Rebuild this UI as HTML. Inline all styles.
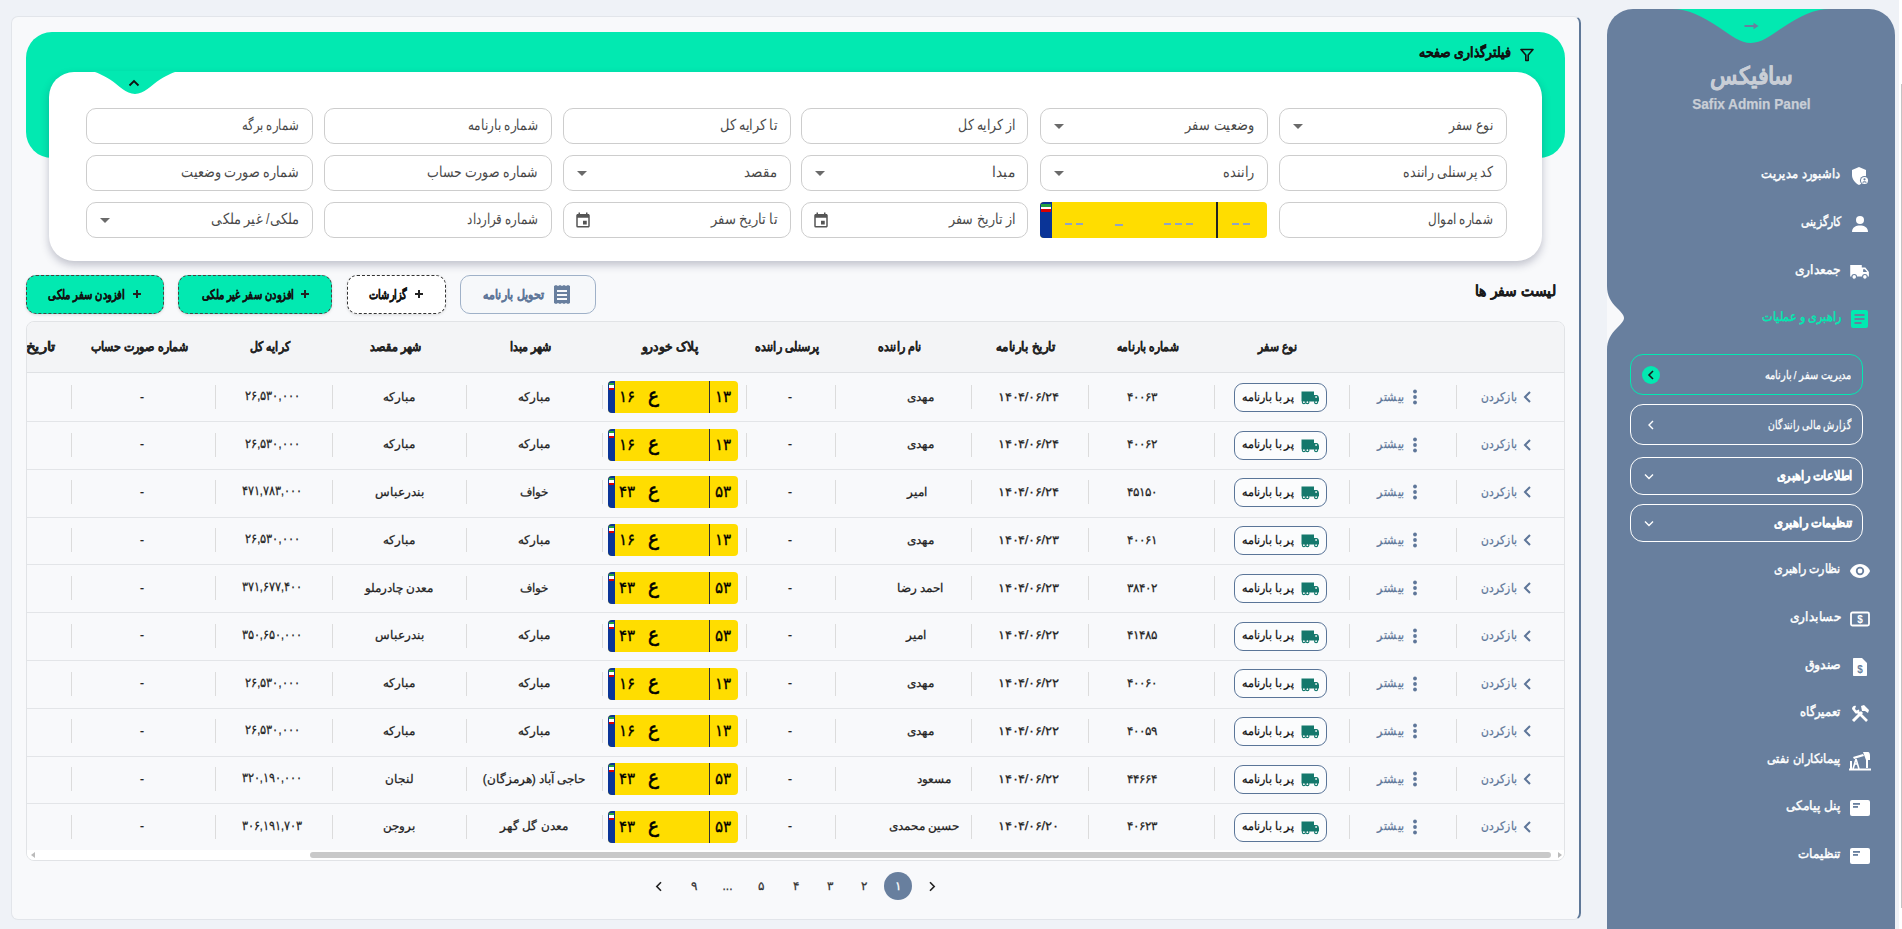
<!DOCTYPE html><html lang="fa" dir="rtl"><head><meta charset="utf-8"><style>
*{box-sizing:border-box;margin:0;padding:0}
html,body{width:1902px;height:929px;overflow:hidden}
body{background:#eff2f7;font-family:"Liberation Sans",sans-serif;color:#222;position:relative}
.a{position:absolute}
.t{position:absolute;white-space:nowrap;display:block;-webkit-text-stroke:.25px currentColor}
.main{position:absolute;left:11px;top:16px;width:1570px;height:904px;background:#f8f9fb;border:1px solid #e2e5ea;border-right:2px solid #5f7898;border-radius:7px}
.side{position:absolute;left:1607px;top:9px;width:288px;height:940px;background:#687f9e;border-radius:26px 26px 0 0;overflow:hidden}
.green{position:absolute;left:26px;top:32px;width:1539px;height:126px;background:#02e9b1;border-radius:26px}
.card{position:absolute;left:49px;top:72px;width:1493px;height:189px;background:#fff;border-radius:25px;box-shadow:0 4px 9px rgba(30,35,70,.26)}
.inp{position:absolute;height:36px;width:227.5px;border:1px solid #cdcdcd;border-radius:10px;background:#fff}
.tri{position:absolute;left:13px;top:15px;width:0;height:0;border-left:5px solid transparent;border-right:5px solid transparent;border-top:5px solid #6a6a6a}
.cal{position:absolute;left:10px;top:8px}
.plate{position:absolute;background:#ffdd00;border-radius:4px;overflow:hidden}
.plate .bl{position:absolute;left:0;top:0;bottom:0;background:#0a3497}
.btn{position:absolute;top:275px;height:39px;border-radius:10px}
.tbl{position:absolute;left:26px;top:321px;width:1539px;height:540px;border:1px solid #e1e3e6;border-radius:8px;overflow:hidden;background:#f8f9fb}
.th{position:absolute;top:0;height:51px;left:0;right:0;background:#f3f4f6;border-bottom:1px solid #dfe1e4}
.row{position:absolute;left:0;right:0;height:48px;border-bottom:1px solid #e3e5e8}
.sep{position:absolute;top:12px;width:1px;height:24px;background:#dcdcdc}
.badge{position:absolute;border:1.5px solid #5a7598;border-radius:9px;background:#fbfcfd}
.sub{position:absolute;left:23px;width:233px;border:1.5px solid #fff;border-radius:13px}
</style></head><body>
<div class="main"></div>
<div class="green"></div>
<div class="card"></div>
<svg class="a" style="left:91px;top:71px" width="88" height="24" viewBox="0 0 88 24"><path fill="#02e9b1" d="M0 0 H88 C83 1 77 3.5 69 8.5 C60 14.5 53 23 44 23 C35 23 28 14.5 19 8.5 C11 3.5 5 1 0 0 Z"/></svg>
<svg class="a" style="left:128px;top:79px" width="12" height="8" viewBox="0 0 12 8"><path d="M1.5 6.5 L6 2 L10.5 6.5" stroke="#111" stroke-width="1.8" fill="none"/></svg>
<svg class="a" style="left:1520px;top:48px" width="14" height="14" viewBox="0 0 14 14"><path d="M1 1.5 H13 L8.2 7 V12.5 H5.8 V7 Z" fill="none" stroke="#111" stroke-width="1.6" stroke-linejoin="round"/></svg>
<span class="t" style="left:1387.0px;transform-origin:right center;top:43.5px;font-size:13.5px;line-height:17px;font-weight:bold;color:#111;transform:scaleX(0.742)">فیلترگذاری صفحه</span>
<div class="inp" style="left:1279.00px;top:108px"><i class="tri"></i></div>
<span class="t" style="left:1439.0px;transform-origin:right center;top:115.5px;font-size:14.5px;line-height:18px;font-weight:normal;color:#4a4a4a;transform:scaleX(0.815);-webkit-text-stroke:0">نوع سفر</span>
<div class="inp" style="left:1040.30px;top:108px"><i class="tri"></i></div>
<span class="t" style="left:1174.3px;transform-origin:right center;top:115.5px;font-size:14.5px;line-height:18px;font-weight:normal;color:#4a4a4a;transform:scaleX(0.863);-webkit-text-stroke:0">وضعیت سفر</span>
<div class="inp" style="left:800.80px;top:108px"></div>
<span class="t" style="left:946.8px;transform-origin:right center;top:115.5px;font-size:14.5px;line-height:18px;font-weight:normal;color:#4a4a4a;transform:scaleX(0.832);-webkit-text-stroke:0">از کرایه کل</span>
<div class="inp" style="left:563.00px;top:108px"></div>
<span class="t" style="left:711.0px;transform-origin:right center;top:115.5px;font-size:14.5px;line-height:18px;font-weight:normal;color:#4a4a4a;transform:scaleX(0.862);-webkit-text-stroke:0">تا کرایه کل</span>
<div class="inp" style="left:324.20px;top:108px"></div>
<span class="t" style="left:451.2px;transform-origin:right center;top:115.5px;font-size:14.5px;line-height:18px;font-weight:normal;color:#4a4a4a;transform:scaleX(0.805);-webkit-text-stroke:0">شماره بارنامه</span>
<div class="inp" style="left:85.50px;top:108px"></div>
<span class="t" style="left:226.5px;transform-origin:right center;top:115.5px;font-size:14.5px;line-height:18px;font-weight:normal;color:#4a4a4a;transform:scaleX(0.778);-webkit-text-stroke:0">شماره برگه</span>
<div class="inp" style="left:1279.00px;top:155px"></div>
<span class="t" style="left:1386.0px;transform-origin:right center;top:162.5px;font-size:14.5px;line-height:18px;font-weight:normal;color:#4a4a4a;transform:scaleX(0.840);-webkit-text-stroke:0">کد پرسنلی راننده</span>
<div class="inp" style="left:1040.30px;top:155px"><i class="tri"></i></div>
<span class="t" style="left:1218.3px;transform-origin:right center;top:162.5px;font-size:14.5px;line-height:18px;font-weight:normal;color:#4a4a4a;transform:scaleX(0.858);-webkit-text-stroke:0">راننده</span>
<div class="inp" style="left:800.80px;top:155px"><i class="tri"></i></div>
<span class="t" style="left:989.8px;transform-origin:right center;top:162.5px;font-size:14.5px;line-height:18px;font-weight:normal;color:#4a4a4a;transform:scaleX(0.920);-webkit-text-stroke:0">مبدا</span>
<div class="inp" style="left:563.00px;top:155px"><i class="tri"></i></div>
<span class="t" style="left:740.0px;transform-origin:right center;top:162.5px;font-size:14.5px;line-height:18px;font-weight:normal;color:#4a4a4a;transform:scaleX(0.886);-webkit-text-stroke:0">مقصد</span>
<div class="inp" style="left:324.20px;top:155px"></div>
<span class="t" style="left:405.2px;transform-origin:right center;top:162.5px;font-size:14.5px;line-height:18px;font-weight:normal;color:#4a4a4a;transform:scaleX(0.835);-webkit-text-stroke:0">شماره صورت حساب</span>
<div class="inp" style="left:85.50px;top:155px"></div>
<span class="t" style="left:160.5px;transform-origin:right center;top:162.5px;font-size:14.5px;line-height:18px;font-weight:normal;color:#4a4a4a;transform:scaleX(0.851);-webkit-text-stroke:0">شماره صورت وضعیت</span>
<div class="inp" style="left:1279.00px;top:202px"></div>
<span class="t" style="left:1412.0px;transform-origin:right center;top:209.5px;font-size:14.5px;line-height:18px;font-weight:normal;color:#4a4a4a;transform:scaleX(0.799);-webkit-text-stroke:0">شماره اموال</span>
<div class="plate" style="left:1040px;top:202px;width:227px;height:36px"><div class="bl" style="width:12px"></div><div class="a" style="left:1px;top:2px;width:10px;height:8px;background:linear-gradient(#239f40 0 33%,#fff 33% 66%,#da0000 66%)"></div></div>
<div class="a" style="left:1216px;top:202px;width:2px;height:36px;background:#222"></div>
<div class="a" style="left:1065px;top:223px;width:7px;height:1.5px;background:#90a4c4"></div>
<div class="a" style="left:1076px;top:223px;width:7px;height:1.5px;background:#90a4c4"></div>
<div class="a" style="left:1115px;top:224px;width:8px;height:1.5px;background:#90a4c4"></div>
<div class="a" style="left:1164px;top:223px;width:7px;height:1.5px;background:#90a4c4"></div>
<div class="a" style="left:1175px;top:223px;width:7px;height:1.5px;background:#90a4c4"></div>
<div class="a" style="left:1186px;top:223px;width:7px;height:1.5px;background:#90a4c4"></div>
<div class="a" style="left:1232px;top:223px;width:7px;height:1.5px;background:#90a4c4"></div>
<div class="a" style="left:1243px;top:223px;width:7px;height:1.5px;background:#90a4c4"></div>
<div class="inp" style="left:800.80px;top:202px"><svg class="cal" width="18" height="18" viewBox="0 0 24 24"><path fill="#555" d="M19 4h-1V2h-2v2H8V2H6v2H5c-1.11 0-2 .9-2 2v14a2 2 0 0 0 2 2h14c1.1 0 2-.9 2-2V6c0-1.1-.9-2-2-2zm0 16H5V9h14v11zM12 13h5v5h-5z"/></svg></div>
<span class="t" style="left:936.8px;transform-origin:right center;top:209.5px;font-size:14.5px;line-height:18px;font-weight:normal;color:#4a4a4a;transform:scaleX(0.849);-webkit-text-stroke:0">از تاریخ سفر</span>
<div class="inp" style="left:563.00px;top:202px"><svg class="cal" width="18" height="18" viewBox="0 0 24 24"><path fill="#555" d="M19 4h-1V2h-2v2H8V2H6v2H5c-1.11 0-2 .9-2 2v14a2 2 0 0 0 2 2h14c1.1 0 2-.9 2-2V6c0-1.1-.9-2-2-2zm0 16H5V9h14v11zM12 13h5v5h-5z"/></svg></div>
<span class="t" style="left:701.0px;transform-origin:right center;top:209.5px;font-size:14.5px;line-height:18px;font-weight:normal;color:#4a4a4a;transform:scaleX(0.874);-webkit-text-stroke:0">تا تاریخ سفر</span>
<div class="inp" style="left:324.20px;top:202px"></div>
<span class="t" style="left:448.2px;transform-origin:right center;top:209.5px;font-size:14.5px;line-height:18px;font-weight:normal;color:#4a4a4a;transform:scaleX(0.789);-webkit-text-stroke:0">شماره قرارداد</span>
<div class="inp" style="left:85.50px;top:202px"><i class="tri"></i></div>
<span class="t" style="left:198.5px;transform-origin:right center;top:209.5px;font-size:14.5px;line-height:18px;font-weight:normal;color:#4a4a4a;transform:scaleX(0.868);-webkit-text-stroke:0">ملکی/ غیر ملکی</span>
<span class="t" style="left:1454.0px;transform-origin:right center;top:280.5px;font-size:15px;line-height:19px;font-weight:bold;color:#1a1a1a;transform:scaleX(0.799)">لیست سفر ها</span>
<div class="btn" style="left:460px;width:136px;border:1px solid #9fb1c8;background:#f6f8fa"></div>
<svg class="a" style="left:553px;top:285px" width="18" height="19" viewBox="0 0 18 19"><path fill="#687f9e" d="M1 1 L3 0 L5 1 L7 0 L9 1 L11 0 L13 1 L15 0 L17 1 V18 L15 19 L13 18 L11 19 L9 18 L7 19 L5 18 L3 19 L1 18 Z"/><rect x="4" y="5" width="10" height="2" fill="#f6f8fa"/><rect x="4" y="9" width="10" height="2" fill="#f6f8fa"/><rect x="4" y="13" width="10" height="2" fill="#f6f8fa"/></svg>
<span class="t" style="left:458.0px;transform-origin:right center;top:286.5px;font-size:12.5px;line-height:16px;font-weight:bold;color:#5e7699;transform:scaleX(0.714)">تحویل بارنامه</span>
<div class="btn" style="left:347px;width:99px;border:1px dashed #333;background:#fff;box-shadow:0 1px 3px rgba(0,0,0,.12)"></div>
<div class="btn" style="left:178px;width:154px;border:1px dashed #444;background:#02e9b1;box-shadow:0 1px 3px rgba(0,0,0,.12)"></div>
<div class="btn" style="left:26px;width:138px;border:1px dashed #444;background:#02e9b1;box-shadow:0 1px 3px rgba(0,0,0,.12)"></div>
<div class="a" style="left:415px;top:293px;width:8px;height:2px;background:#222"></div><div class="a" style="left:418px;top:290px;width:2px;height:8px;background:#222"></div>
<div class="a" style="left:301.4px;top:293px;width:8px;height:2px;background:#222"></div><div class="a" style="left:304.4px;top:290px;width:2px;height:8px;background:#222"></div>
<div class="a" style="left:133px;top:293px;width:8px;height:2px;background:#222"></div><div class="a" style="left:136px;top:290px;width:2px;height:8px;background:#222"></div>
<span class="t" style="left:349.3px;transform-origin:right center;top:286.5px;font-size:12.5px;line-height:16px;font-weight:bold;color:#111;transform:scaleX(0.653)">گزارشات</span>
<span class="t" style="left:149.0px;transform-origin:right center;top:286.5px;font-size:12.5px;line-height:16px;font-weight:bold;color:#111;transform:scaleX(0.638)">افزودن سفر غیر ملکی</span>
<span class="t" style="left:6.0px;transform-origin:right center;top:286.5px;font-size:12.5px;line-height:16px;font-weight:bold;color:#111;transform:scaleX(0.643)">افزودن سفر ملکی</span>
<div class="tbl"><div class="th"></div>
<span class="t" style="left:1222.5px;transform-origin:center center;top:17.0px;font-size:12.5px;line-height:16px;font-weight:bold;color:#222;transform:scaleX(0.704)">نوع سفر</span>
<span class="t" style="left:1076.1px;transform-origin:center center;top:17.0px;font-size:12.5px;line-height:16px;font-weight:bold;color:#222;transform:scaleX(0.697)">شماره بارنامه</span>
<span class="t" style="left:959.6px;transform-origin:center center;top:17.0px;font-size:12.5px;line-height:16px;font-weight:bold;color:#222;transform:scaleX(0.767)">تاریخ بارنامه</span>
<span class="t" style="left:842.0px;transform-origin:center center;top:17.0px;font-size:12.5px;line-height:16px;font-weight:bold;color:#222;transform:scaleX(0.716)">نام راننده</span>
<span class="t" style="left:715.5px;transform-origin:center center;top:17.0px;font-size:12.5px;line-height:16px;font-weight:bold;color:#222;transform:scaleX(0.722)">پرسنلی راننده</span>
<span class="t" style="left:607.5px;transform-origin:center center;top:17.0px;font-size:12.5px;line-height:16px;font-weight:bold;color:#222;transform:scaleX(0.806)">پلاک خودرو</span>
<span class="t" style="left:474.5px;transform-origin:center center;top:17.0px;font-size:12.5px;line-height:16px;font-weight:bold;color:#222;transform:scaleX(0.712)">شهر مبدا</span>
<span class="t" style="left:333.0px;transform-origin:center center;top:17.0px;font-size:12.5px;line-height:16px;font-weight:bold;color:#222;transform:scaleX(0.701)">شهر مقصد</span>
<span class="t" style="left:214.5px;transform-origin:center center;top:17.0px;font-size:12.5px;line-height:16px;font-weight:bold;color:#222;transform:scaleX(0.702)">کرایه کل</span>
<span class="t" style="left:46.5px;transform-origin:center center;top:17.0px;font-size:12.5px;line-height:16px;font-weight:bold;color:#222;transform:scaleX(0.745)">شماره صورت حساب</span>
<span class="t" style="left:-2.0px;transform-origin:right center;top:17.0px;font-size:12.5px;line-height:16px;font-weight:bold;color:#222;transform:scaleX(0.968)">تاریخ</span>
<div class="row" style="top:51px;height:49.0px">
<i class="sep" style="left:1429.4px;top:12.0px"></i>
<i class="sep" style="left:1321.5px;top:12.0px"></i>
<i class="sep" style="left:1186.6px;top:12.0px"></i>
<i class="sep" style="left:1060.6px;top:12.0px"></i>
<i class="sep" style="left:943.5px;top:12.0px"></i>
<i class="sep" style="left:808.4px;top:12.0px"></i>
<i class="sep" style="left:718.5px;top:12.0px"></i>
<i class="sep" style="left:574.6px;top:12.0px"></i>
<i class="sep" style="left:439.4px;top:12.0px"></i>
<i class="sep" style="left:304.5px;top:12.0px"></i>
<i class="sep" style="left:187.5px;top:12.0px"></i>
<i class="sep" style="left:43.5px;top:12.0px"></i>
<span class="t" style="left:1450.0px;transform-origin:right center;top:16.5px;font-size:12px;line-height:15px;font-weight:normal;color:#5e7699;transform:scaleX(0.893)">بازکردن</span>
<svg class="a" style="left:1496px;top:18.0px" width="9" height="12" viewBox="0 0 9 12"><path d="M7 1 L2 6 L7 11" stroke="#5e7699" stroke-width="2" fill="none"/></svg>
<span class="t" style="left:1348.0px;transform-origin:right center;top:16.5px;font-size:12px;line-height:15px;font-weight:normal;color:#5e7699;transform:scaleX(0.917)">بیشتر</span>
<svg class="a" style="left:1385px;top:16.0px" width="6" height="16" viewBox="0 0 6 16"><circle cx="3" cy="2.5" r="1.9" fill="#5e7699"/><circle cx="3" cy="8" r="1.9" fill="#5e7699"/><circle cx="3" cy="13.5" r="1.9" fill="#5e7699"/></svg>
<div class="badge" style="left:1207px;top:9.8px;width:93px;height:29px"></div>
<span class="t" style="left:1211.7px;transform-origin:right center;top:16.5px;font-size:12px;line-height:15px;font-weight:normal;color:#111;transform:scaleX(0.931)">پر با بارنامه</span>
<svg class="a" style="left:1274px;top:18.0px" width="19" height="14" viewBox="0 0 19 14"><path fill="#14786c" d="M0.5 0.5 H13 V4 H15.5 C17 4 18 5.5 18 7.5 V10.5 H0.5 Z"/><rect x="14.3" y="5.2" width="1.6" height="1.6" fill="#fbfcfd"/><circle cx="2.9" cy="11.2" r="1.5" fill="#fbfcfd" stroke="#14786c" stroke-width="1.2"/><circle cx="6.4" cy="11.2" r="1.5" fill="#fbfcfd" stroke="#14786c" stroke-width="1.2"/><circle cx="15.1" cy="11.2" r="1.5" fill="#fbfcfd" stroke="#14786c" stroke-width="1.2"/></svg>
<span class="t" style="left:1100.0px;transform-origin:center center;top:16.5px;font-size:12px;line-height:15px;font-weight:normal;color:#222">۴۰۰۶۳</span>
<span class="t" style="left:974.0px;transform-origin:center center;top:16.5px;font-size:12px;line-height:15px;font-weight:normal;color:#222;transform:scaleX(1.107)">۱۴۰۴/۰۶/۲۴</span>
<span class="t" style="left:880.0px;transform-origin:right center;top:16.5px;font-size:12px;line-height:15px;font-weight:normal;color:#222">مهدی</span>
<span class="t" style="left:761.0px;transform-origin:center center;top:16.5px;font-size:12px;line-height:15px;font-weight:normal;color:#222">-</span>
<div class="plate" style="left:581px;top:8.0px;width:130px;height:32px"><div class="bl" style="width:7px"></div><div class="a" style="left:1px;top:2px;width:5px;height:7px;background:linear-gradient(#239f40 0 33%,#fff 33% 66%,#da0000 66%)"></div><div class="a" style="left:101px;top:0;width:1px;height:32px;background:#333"></div></div>
<span class="t" style="left:687.0px;transform-origin:center center;top:14.0px;font-size:16px;line-height:20px;font-weight:normal;color:#000;transform:scaleX(0.944);-webkit-text-stroke:.3px #000">۱۳</span>
<span class="t" style="left:620.5px;transform-origin:center center;top:10.0px;font-size:20px;line-height:25px;font-weight:normal;color:#000;transform:scaleX(0.917);-webkit-text-stroke:.6px #000">ع</span>
<span class="t" style="left:591.0px;transform-origin:center center;top:14.0px;font-size:16px;line-height:20px;font-weight:normal;color:#000;transform:scaleX(0.944);-webkit-text-stroke:.3px #000">۱۶</span>
<span class="t" style="left:491.0px;transform-origin:center center;top:16.5px;font-size:12px;line-height:15px;font-weight:normal;color:#222">مبارکه</span>
<span class="t" style="left:356.0px;transform-origin:center center;top:16.5px;font-size:12px;line-height:15px;font-weight:normal;color:#222">مبارکه</span>
<span class="t" style="left:213.4px;transform-origin:center center;top:15.0px;font-size:12.5px;line-height:16px;font-weight:normal;color:#222;transform:scaleX(0.863)">۲۶,۵۳۰,۰۰۰</span>
<span class="t" style="left:113.0px;transform-origin:center center;top:16.5px;font-size:12px;line-height:15px;font-weight:normal;color:#222">-</span>
</div>
<div class="row" style="top:100.0px;height:47.8px">
<i class="sep" style="left:1429.4px;top:10.8px"></i>
<i class="sep" style="left:1321.5px;top:10.8px"></i>
<i class="sep" style="left:1186.6px;top:10.8px"></i>
<i class="sep" style="left:1060.6px;top:10.8px"></i>
<i class="sep" style="left:943.5px;top:10.8px"></i>
<i class="sep" style="left:808.4px;top:10.8px"></i>
<i class="sep" style="left:718.5px;top:10.8px"></i>
<i class="sep" style="left:574.6px;top:10.8px"></i>
<i class="sep" style="left:439.4px;top:10.8px"></i>
<i class="sep" style="left:304.5px;top:10.8px"></i>
<i class="sep" style="left:187.5px;top:10.8px"></i>
<i class="sep" style="left:43.5px;top:10.8px"></i>
<span class="t" style="left:1450.0px;transform-origin:right center;top:15.3px;font-size:12px;line-height:15px;font-weight:normal;color:#5e7699;transform:scaleX(0.893)">بازکردن</span>
<svg class="a" style="left:1496px;top:16.8px" width="9" height="12" viewBox="0 0 9 12"><path d="M7 1 L2 6 L7 11" stroke="#5e7699" stroke-width="2" fill="none"/></svg>
<span class="t" style="left:1348.0px;transform-origin:right center;top:15.3px;font-size:12px;line-height:15px;font-weight:normal;color:#5e7699;transform:scaleX(0.917)">بیشتر</span>
<svg class="a" style="left:1385px;top:14.8px" width="6" height="16" viewBox="0 0 6 16"><circle cx="3" cy="2.5" r="1.9" fill="#5e7699"/><circle cx="3" cy="8" r="1.9" fill="#5e7699"/><circle cx="3" cy="13.5" r="1.9" fill="#5e7699"/></svg>
<div class="badge" style="left:1207px;top:8.6px;width:93px;height:29px"></div>
<span class="t" style="left:1211.7px;transform-origin:right center;top:15.3px;font-size:12px;line-height:15px;font-weight:normal;color:#111;transform:scaleX(0.931)">پر با بارنامه</span>
<svg class="a" style="left:1274px;top:16.8px" width="19" height="14" viewBox="0 0 19 14"><path fill="#14786c" d="M0.5 0.5 H13 V4 H15.5 C17 4 18 5.5 18 7.5 V10.5 H0.5 Z"/><rect x="14.3" y="5.2" width="1.6" height="1.6" fill="#fbfcfd"/><circle cx="2.9" cy="11.2" r="1.5" fill="#fbfcfd" stroke="#14786c" stroke-width="1.2"/><circle cx="6.4" cy="11.2" r="1.5" fill="#fbfcfd" stroke="#14786c" stroke-width="1.2"/><circle cx="15.1" cy="11.2" r="1.5" fill="#fbfcfd" stroke="#14786c" stroke-width="1.2"/></svg>
<span class="t" style="left:1100.0px;transform-origin:center center;top:15.3px;font-size:12px;line-height:15px;font-weight:normal;color:#222">۴۰۰۶۲</span>
<span class="t" style="left:974.0px;transform-origin:center center;top:15.3px;font-size:12px;line-height:15px;font-weight:normal;color:#222;transform:scaleX(1.107)">۱۴۰۴/۰۶/۲۴</span>
<span class="t" style="left:880.0px;transform-origin:right center;top:15.3px;font-size:12px;line-height:15px;font-weight:normal;color:#222">مهدی</span>
<span class="t" style="left:761.0px;transform-origin:center center;top:15.3px;font-size:12px;line-height:15px;font-weight:normal;color:#222">-</span>
<div class="plate" style="left:581px;top:6.8px;width:130px;height:32px"><div class="bl" style="width:7px"></div><div class="a" style="left:1px;top:2px;width:5px;height:7px;background:linear-gradient(#239f40 0 33%,#fff 33% 66%,#da0000 66%)"></div><div class="a" style="left:101px;top:0;width:1px;height:32px;background:#333"></div></div>
<span class="t" style="left:687.0px;transform-origin:center center;top:12.8px;font-size:16px;line-height:20px;font-weight:normal;color:#000;transform:scaleX(0.944);-webkit-text-stroke:.3px #000">۱۳</span>
<span class="t" style="left:620.5px;transform-origin:center center;top:8.8px;font-size:20px;line-height:25px;font-weight:normal;color:#000;transform:scaleX(0.917);-webkit-text-stroke:.6px #000">ع</span>
<span class="t" style="left:591.0px;transform-origin:center center;top:12.8px;font-size:16px;line-height:20px;font-weight:normal;color:#000;transform:scaleX(0.944);-webkit-text-stroke:.3px #000">۱۶</span>
<span class="t" style="left:491.0px;transform-origin:center center;top:15.3px;font-size:12px;line-height:15px;font-weight:normal;color:#222">مبارکه</span>
<span class="t" style="left:356.0px;transform-origin:center center;top:15.3px;font-size:12px;line-height:15px;font-weight:normal;color:#222">مبارکه</span>
<span class="t" style="left:213.4px;transform-origin:center center;top:13.8px;font-size:12.5px;line-height:16px;font-weight:normal;color:#222;transform:scaleX(0.863)">۲۶,۵۳۰,۰۰۰</span>
<span class="t" style="left:113.0px;transform-origin:center center;top:15.3px;font-size:12px;line-height:15px;font-weight:normal;color:#222">-</span>
</div>
<div class="row" style="top:147.8px;height:47.8px">
<i class="sep" style="left:1429.4px;top:10.7px"></i>
<i class="sep" style="left:1321.5px;top:10.7px"></i>
<i class="sep" style="left:1186.6px;top:10.7px"></i>
<i class="sep" style="left:1060.6px;top:10.7px"></i>
<i class="sep" style="left:943.5px;top:10.7px"></i>
<i class="sep" style="left:808.4px;top:10.7px"></i>
<i class="sep" style="left:718.5px;top:10.7px"></i>
<i class="sep" style="left:574.6px;top:10.7px"></i>
<i class="sep" style="left:439.4px;top:10.7px"></i>
<i class="sep" style="left:304.5px;top:10.7px"></i>
<i class="sep" style="left:187.5px;top:10.7px"></i>
<i class="sep" style="left:43.5px;top:10.7px"></i>
<span class="t" style="left:1450.0px;transform-origin:right center;top:15.2px;font-size:12px;line-height:15px;font-weight:normal;color:#5e7699;transform:scaleX(0.893)">بازکردن</span>
<svg class="a" style="left:1496px;top:16.7px" width="9" height="12" viewBox="0 0 9 12"><path d="M7 1 L2 6 L7 11" stroke="#5e7699" stroke-width="2" fill="none"/></svg>
<span class="t" style="left:1348.0px;transform-origin:right center;top:15.2px;font-size:12px;line-height:15px;font-weight:normal;color:#5e7699;transform:scaleX(0.917)">بیشتر</span>
<svg class="a" style="left:1385px;top:14.7px" width="6" height="16" viewBox="0 0 6 16"><circle cx="3" cy="2.5" r="1.9" fill="#5e7699"/><circle cx="3" cy="8" r="1.9" fill="#5e7699"/><circle cx="3" cy="13.5" r="1.9" fill="#5e7699"/></svg>
<div class="badge" style="left:1207px;top:8.5px;width:93px;height:29px"></div>
<span class="t" style="left:1211.7px;transform-origin:right center;top:15.2px;font-size:12px;line-height:15px;font-weight:normal;color:#111;transform:scaleX(0.931)">پر با بارنامه</span>
<svg class="a" style="left:1274px;top:16.7px" width="19" height="14" viewBox="0 0 19 14"><path fill="#14786c" d="M0.5 0.5 H13 V4 H15.5 C17 4 18 5.5 18 7.5 V10.5 H0.5 Z"/><rect x="14.3" y="5.2" width="1.6" height="1.6" fill="#fbfcfd"/><circle cx="2.9" cy="11.2" r="1.5" fill="#fbfcfd" stroke="#14786c" stroke-width="1.2"/><circle cx="6.4" cy="11.2" r="1.5" fill="#fbfcfd" stroke="#14786c" stroke-width="1.2"/><circle cx="15.1" cy="11.2" r="1.5" fill="#fbfcfd" stroke="#14786c" stroke-width="1.2"/></svg>
<span class="t" style="left:1100.0px;transform-origin:center center;top:15.2px;font-size:12px;line-height:15px;font-weight:normal;color:#222">۴۵۱۵۰</span>
<span class="t" style="left:974.0px;transform-origin:center center;top:15.2px;font-size:12px;line-height:15px;font-weight:normal;color:#222;transform:scaleX(1.107)">۱۴۰۴/۰۶/۲۴</span>
<span class="t" style="left:880.0px;transform-origin:right center;top:15.2px;font-size:12px;line-height:15px;font-weight:normal;color:#222">امیر</span>
<span class="t" style="left:761.0px;transform-origin:center center;top:15.2px;font-size:12px;line-height:15px;font-weight:normal;color:#222">-</span>
<div class="plate" style="left:581px;top:6.7px;width:130px;height:32px"><div class="bl" style="width:7px"></div><div class="a" style="left:1px;top:2px;width:5px;height:7px;background:linear-gradient(#239f40 0 33%,#fff 33% 66%,#da0000 66%)"></div><div class="a" style="left:101px;top:0;width:1px;height:32px;background:#333"></div></div>
<span class="t" style="left:687.0px;transform-origin:center center;top:12.7px;font-size:16px;line-height:20px;font-weight:normal;color:#000;transform:scaleX(0.944);-webkit-text-stroke:.3px #000">۵۳</span>
<span class="t" style="left:620.5px;transform-origin:center center;top:8.7px;font-size:20px;line-height:25px;font-weight:normal;color:#000;transform:scaleX(0.917);-webkit-text-stroke:.6px #000">ع</span>
<span class="t" style="left:591.0px;transform-origin:center center;top:12.7px;font-size:16px;line-height:20px;font-weight:normal;color:#000;transform:scaleX(0.944);-webkit-text-stroke:.3px #000">۴۳</span>
<span class="t" style="left:493.0px;transform-origin:center center;top:15.2px;font-size:12px;line-height:15px;font-weight:normal;color:#222">خواف</span>
<span class="t" style="left:347.5px;transform-origin:center center;top:15.2px;font-size:12px;line-height:15px;font-weight:normal;color:#222">بندرعباس</span>
<span class="t" style="left:209.9px;transform-origin:center center;top:13.7px;font-size:12.5px;line-height:16px;font-weight:normal;color:#222;transform:scaleX(0.855)">۴۷۱,۷۸۳,۰۰۰</span>
<span class="t" style="left:113.0px;transform-origin:center center;top:15.2px;font-size:12px;line-height:15px;font-weight:normal;color:#222">-</span>
</div>
<div class="row" style="top:195.6px;height:47.8px">
<i class="sep" style="left:1429.4px;top:10.7px"></i>
<i class="sep" style="left:1321.5px;top:10.7px"></i>
<i class="sep" style="left:1186.6px;top:10.7px"></i>
<i class="sep" style="left:1060.6px;top:10.7px"></i>
<i class="sep" style="left:943.5px;top:10.7px"></i>
<i class="sep" style="left:808.4px;top:10.7px"></i>
<i class="sep" style="left:718.5px;top:10.7px"></i>
<i class="sep" style="left:574.6px;top:10.7px"></i>
<i class="sep" style="left:439.4px;top:10.7px"></i>
<i class="sep" style="left:304.5px;top:10.7px"></i>
<i class="sep" style="left:187.5px;top:10.7px"></i>
<i class="sep" style="left:43.5px;top:10.7px"></i>
<span class="t" style="left:1450.0px;transform-origin:right center;top:15.2px;font-size:12px;line-height:15px;font-weight:normal;color:#5e7699;transform:scaleX(0.893)">بازکردن</span>
<svg class="a" style="left:1496px;top:16.7px" width="9" height="12" viewBox="0 0 9 12"><path d="M7 1 L2 6 L7 11" stroke="#5e7699" stroke-width="2" fill="none"/></svg>
<span class="t" style="left:1348.0px;transform-origin:right center;top:15.2px;font-size:12px;line-height:15px;font-weight:normal;color:#5e7699;transform:scaleX(0.917)">بیشتر</span>
<svg class="a" style="left:1385px;top:14.7px" width="6" height="16" viewBox="0 0 6 16"><circle cx="3" cy="2.5" r="1.9" fill="#5e7699"/><circle cx="3" cy="8" r="1.9" fill="#5e7699"/><circle cx="3" cy="13.5" r="1.9" fill="#5e7699"/></svg>
<div class="badge" style="left:1207px;top:8.5px;width:93px;height:29px"></div>
<span class="t" style="left:1211.7px;transform-origin:right center;top:15.2px;font-size:12px;line-height:15px;font-weight:normal;color:#111;transform:scaleX(0.931)">پر با بارنامه</span>
<svg class="a" style="left:1274px;top:16.7px" width="19" height="14" viewBox="0 0 19 14"><path fill="#14786c" d="M0.5 0.5 H13 V4 H15.5 C17 4 18 5.5 18 7.5 V10.5 H0.5 Z"/><rect x="14.3" y="5.2" width="1.6" height="1.6" fill="#fbfcfd"/><circle cx="2.9" cy="11.2" r="1.5" fill="#fbfcfd" stroke="#14786c" stroke-width="1.2"/><circle cx="6.4" cy="11.2" r="1.5" fill="#fbfcfd" stroke="#14786c" stroke-width="1.2"/><circle cx="15.1" cy="11.2" r="1.5" fill="#fbfcfd" stroke="#14786c" stroke-width="1.2"/></svg>
<span class="t" style="left:1100.0px;transform-origin:center center;top:15.2px;font-size:12px;line-height:15px;font-weight:normal;color:#222">۴۰۰۶۱</span>
<span class="t" style="left:974.0px;transform-origin:center center;top:15.2px;font-size:12px;line-height:15px;font-weight:normal;color:#222;transform:scaleX(1.107)">۱۴۰۴/۰۶/۲۳</span>
<span class="t" style="left:880.0px;transform-origin:right center;top:15.2px;font-size:12px;line-height:15px;font-weight:normal;color:#222">مهدی</span>
<span class="t" style="left:761.0px;transform-origin:center center;top:15.2px;font-size:12px;line-height:15px;font-weight:normal;color:#222">-</span>
<div class="plate" style="left:581px;top:6.7px;width:130px;height:32px"><div class="bl" style="width:7px"></div><div class="a" style="left:1px;top:2px;width:5px;height:7px;background:linear-gradient(#239f40 0 33%,#fff 33% 66%,#da0000 66%)"></div><div class="a" style="left:101px;top:0;width:1px;height:32px;background:#333"></div></div>
<span class="t" style="left:687.0px;transform-origin:center center;top:12.7px;font-size:16px;line-height:20px;font-weight:normal;color:#000;transform:scaleX(0.944);-webkit-text-stroke:.3px #000">۱۳</span>
<span class="t" style="left:620.5px;transform-origin:center center;top:8.7px;font-size:20px;line-height:25px;font-weight:normal;color:#000;transform:scaleX(0.917);-webkit-text-stroke:.6px #000">ع</span>
<span class="t" style="left:591.0px;transform-origin:center center;top:12.7px;font-size:16px;line-height:20px;font-weight:normal;color:#000;transform:scaleX(0.944);-webkit-text-stroke:.3px #000">۱۶</span>
<span class="t" style="left:491.0px;transform-origin:center center;top:15.2px;font-size:12px;line-height:15px;font-weight:normal;color:#222">مبارکه</span>
<span class="t" style="left:356.0px;transform-origin:center center;top:15.2px;font-size:12px;line-height:15px;font-weight:normal;color:#222">مبارکه</span>
<span class="t" style="left:213.4px;transform-origin:center center;top:13.7px;font-size:12.5px;line-height:16px;font-weight:normal;color:#222;transform:scaleX(0.863)">۲۶,۵۳۰,۰۰۰</span>
<span class="t" style="left:113.0px;transform-origin:center center;top:15.2px;font-size:12px;line-height:15px;font-weight:normal;color:#222">-</span>
</div>
<div class="row" style="top:243.4px;height:47.8px">
<i class="sep" style="left:1429.4px;top:10.7px"></i>
<i class="sep" style="left:1321.5px;top:10.7px"></i>
<i class="sep" style="left:1186.6px;top:10.7px"></i>
<i class="sep" style="left:1060.6px;top:10.7px"></i>
<i class="sep" style="left:943.5px;top:10.7px"></i>
<i class="sep" style="left:808.4px;top:10.7px"></i>
<i class="sep" style="left:718.5px;top:10.7px"></i>
<i class="sep" style="left:574.6px;top:10.7px"></i>
<i class="sep" style="left:439.4px;top:10.7px"></i>
<i class="sep" style="left:304.5px;top:10.7px"></i>
<i class="sep" style="left:187.5px;top:10.7px"></i>
<i class="sep" style="left:43.5px;top:10.7px"></i>
<span class="t" style="left:1450.0px;transform-origin:right center;top:15.2px;font-size:12px;line-height:15px;font-weight:normal;color:#5e7699;transform:scaleX(0.893)">بازکردن</span>
<svg class="a" style="left:1496px;top:16.7px" width="9" height="12" viewBox="0 0 9 12"><path d="M7 1 L2 6 L7 11" stroke="#5e7699" stroke-width="2" fill="none"/></svg>
<span class="t" style="left:1348.0px;transform-origin:right center;top:15.2px;font-size:12px;line-height:15px;font-weight:normal;color:#5e7699;transform:scaleX(0.917)">بیشتر</span>
<svg class="a" style="left:1385px;top:14.7px" width="6" height="16" viewBox="0 0 6 16"><circle cx="3" cy="2.5" r="1.9" fill="#5e7699"/><circle cx="3" cy="8" r="1.9" fill="#5e7699"/><circle cx="3" cy="13.5" r="1.9" fill="#5e7699"/></svg>
<div class="badge" style="left:1207px;top:8.5px;width:93px;height:29px"></div>
<span class="t" style="left:1211.7px;transform-origin:right center;top:15.2px;font-size:12px;line-height:15px;font-weight:normal;color:#111;transform:scaleX(0.931)">پر با بارنامه</span>
<svg class="a" style="left:1274px;top:16.7px" width="19" height="14" viewBox="0 0 19 14"><path fill="#14786c" d="M0.5 0.5 H13 V4 H15.5 C17 4 18 5.5 18 7.5 V10.5 H0.5 Z"/><rect x="14.3" y="5.2" width="1.6" height="1.6" fill="#fbfcfd"/><circle cx="2.9" cy="11.2" r="1.5" fill="#fbfcfd" stroke="#14786c" stroke-width="1.2"/><circle cx="6.4" cy="11.2" r="1.5" fill="#fbfcfd" stroke="#14786c" stroke-width="1.2"/><circle cx="15.1" cy="11.2" r="1.5" fill="#fbfcfd" stroke="#14786c" stroke-width="1.2"/></svg>
<span class="t" style="left:1100.0px;transform-origin:center center;top:15.2px;font-size:12px;line-height:15px;font-weight:normal;color:#222">۳۸۴۰۲</span>
<span class="t" style="left:974.0px;transform-origin:center center;top:15.2px;font-size:12px;line-height:15px;font-weight:normal;color:#222;transform:scaleX(1.107)">۱۴۰۴/۰۶/۲۳</span>
<span class="t" style="left:870.0px;transform-origin:right center;top:15.2px;font-size:12px;line-height:15px;font-weight:normal;color:#222">احمد رضا</span>
<span class="t" style="left:761.0px;transform-origin:center center;top:15.2px;font-size:12px;line-height:15px;font-weight:normal;color:#222">-</span>
<div class="plate" style="left:581px;top:6.7px;width:130px;height:32px"><div class="bl" style="width:7px"></div><div class="a" style="left:1px;top:2px;width:5px;height:7px;background:linear-gradient(#239f40 0 33%,#fff 33% 66%,#da0000 66%)"></div><div class="a" style="left:101px;top:0;width:1px;height:32px;background:#333"></div></div>
<span class="t" style="left:687.0px;transform-origin:center center;top:12.7px;font-size:16px;line-height:20px;font-weight:normal;color:#000;transform:scaleX(0.944);-webkit-text-stroke:.3px #000">۵۳</span>
<span class="t" style="left:620.5px;transform-origin:center center;top:8.7px;font-size:20px;line-height:25px;font-weight:normal;color:#000;transform:scaleX(0.917);-webkit-text-stroke:.6px #000">ع</span>
<span class="t" style="left:591.0px;transform-origin:center center;top:12.7px;font-size:16px;line-height:20px;font-weight:normal;color:#000;transform:scaleX(0.944);-webkit-text-stroke:.3px #000">۴۳</span>
<span class="t" style="left:493.0px;transform-origin:center center;top:15.2px;font-size:12px;line-height:15px;font-weight:normal;color:#222">خواف</span>
<span class="t" style="left:338.0px;transform-origin:center center;top:15.2px;font-size:12px;line-height:15px;font-weight:normal;color:#222">معدن چادرملو</span>
<span class="t" style="left:209.9px;transform-origin:center center;top:13.7px;font-size:12.5px;line-height:16px;font-weight:normal;color:#222;transform:scaleX(0.855)">۳۷۱,۶۷۷,۴۰۰</span>
<span class="t" style="left:113.0px;transform-origin:center center;top:15.2px;font-size:12px;line-height:15px;font-weight:normal;color:#222">-</span>
</div>
<div class="row" style="top:291.2px;height:47.8px">
<i class="sep" style="left:1429.4px;top:10.6px"></i>
<i class="sep" style="left:1321.5px;top:10.6px"></i>
<i class="sep" style="left:1186.6px;top:10.6px"></i>
<i class="sep" style="left:1060.6px;top:10.6px"></i>
<i class="sep" style="left:943.5px;top:10.6px"></i>
<i class="sep" style="left:808.4px;top:10.6px"></i>
<i class="sep" style="left:718.5px;top:10.6px"></i>
<i class="sep" style="left:574.6px;top:10.6px"></i>
<i class="sep" style="left:439.4px;top:10.6px"></i>
<i class="sep" style="left:304.5px;top:10.6px"></i>
<i class="sep" style="left:187.5px;top:10.6px"></i>
<i class="sep" style="left:43.5px;top:10.6px"></i>
<span class="t" style="left:1450.0px;transform-origin:right center;top:15.1px;font-size:12px;line-height:15px;font-weight:normal;color:#5e7699;transform:scaleX(0.893)">بازکردن</span>
<svg class="a" style="left:1496px;top:16.6px" width="9" height="12" viewBox="0 0 9 12"><path d="M7 1 L2 6 L7 11" stroke="#5e7699" stroke-width="2" fill="none"/></svg>
<span class="t" style="left:1348.0px;transform-origin:right center;top:15.1px;font-size:12px;line-height:15px;font-weight:normal;color:#5e7699;transform:scaleX(0.917)">بیشتر</span>
<svg class="a" style="left:1385px;top:14.6px" width="6" height="16" viewBox="0 0 6 16"><circle cx="3" cy="2.5" r="1.9" fill="#5e7699"/><circle cx="3" cy="8" r="1.9" fill="#5e7699"/><circle cx="3" cy="13.5" r="1.9" fill="#5e7699"/></svg>
<div class="badge" style="left:1207px;top:8.4px;width:93px;height:29px"></div>
<span class="t" style="left:1211.7px;transform-origin:right center;top:15.1px;font-size:12px;line-height:15px;font-weight:normal;color:#111;transform:scaleX(0.931)">پر با بارنامه</span>
<svg class="a" style="left:1274px;top:16.6px" width="19" height="14" viewBox="0 0 19 14"><path fill="#14786c" d="M0.5 0.5 H13 V4 H15.5 C17 4 18 5.5 18 7.5 V10.5 H0.5 Z"/><rect x="14.3" y="5.2" width="1.6" height="1.6" fill="#fbfcfd"/><circle cx="2.9" cy="11.2" r="1.5" fill="#fbfcfd" stroke="#14786c" stroke-width="1.2"/><circle cx="6.4" cy="11.2" r="1.5" fill="#fbfcfd" stroke="#14786c" stroke-width="1.2"/><circle cx="15.1" cy="11.2" r="1.5" fill="#fbfcfd" stroke="#14786c" stroke-width="1.2"/></svg>
<span class="t" style="left:1100.0px;transform-origin:center center;top:15.1px;font-size:12px;line-height:15px;font-weight:normal;color:#222">۴۱۴۸۵</span>
<span class="t" style="left:974.0px;transform-origin:center center;top:15.1px;font-size:12px;line-height:15px;font-weight:normal;color:#222;transform:scaleX(1.107)">۱۴۰۴/۰۶/۲۲</span>
<span class="t" style="left:879.0px;transform-origin:right center;top:15.1px;font-size:12px;line-height:15px;font-weight:normal;color:#222">امیر</span>
<span class="t" style="left:761.0px;transform-origin:center center;top:15.1px;font-size:12px;line-height:15px;font-weight:normal;color:#222">-</span>
<div class="plate" style="left:581px;top:6.6px;width:130px;height:32px"><div class="bl" style="width:7px"></div><div class="a" style="left:1px;top:2px;width:5px;height:7px;background:linear-gradient(#239f40 0 33%,#fff 33% 66%,#da0000 66%)"></div><div class="a" style="left:101px;top:0;width:1px;height:32px;background:#333"></div></div>
<span class="t" style="left:687.0px;transform-origin:center center;top:12.6px;font-size:16px;line-height:20px;font-weight:normal;color:#000;transform:scaleX(0.944);-webkit-text-stroke:.3px #000">۵۳</span>
<span class="t" style="left:620.5px;transform-origin:center center;top:8.6px;font-size:20px;line-height:25px;font-weight:normal;color:#000;transform:scaleX(0.917);-webkit-text-stroke:.6px #000">ع</span>
<span class="t" style="left:591.0px;transform-origin:center center;top:12.6px;font-size:16px;line-height:20px;font-weight:normal;color:#000;transform:scaleX(0.944);-webkit-text-stroke:.3px #000">۴۳</span>
<span class="t" style="left:491.0px;transform-origin:center center;top:15.1px;font-size:12px;line-height:15px;font-weight:normal;color:#222">مبارکه</span>
<span class="t" style="left:347.5px;transform-origin:center center;top:15.1px;font-size:12px;line-height:15px;font-weight:normal;color:#222">بندرعباس</span>
<span class="t" style="left:209.9px;transform-origin:center center;top:13.6px;font-size:12.5px;line-height:16px;font-weight:normal;color:#222;transform:scaleX(0.855)">۳۵۰,۶۵۰,۰۰۰</span>
<span class="t" style="left:113.0px;transform-origin:center center;top:15.1px;font-size:12px;line-height:15px;font-weight:normal;color:#222">-</span>
</div>
<div class="row" style="top:339.0px;height:47.8px">
<i class="sep" style="left:1429.4px;top:10.6px"></i>
<i class="sep" style="left:1321.5px;top:10.6px"></i>
<i class="sep" style="left:1186.6px;top:10.6px"></i>
<i class="sep" style="left:1060.6px;top:10.6px"></i>
<i class="sep" style="left:943.5px;top:10.6px"></i>
<i class="sep" style="left:808.4px;top:10.6px"></i>
<i class="sep" style="left:718.5px;top:10.6px"></i>
<i class="sep" style="left:574.6px;top:10.6px"></i>
<i class="sep" style="left:439.4px;top:10.6px"></i>
<i class="sep" style="left:304.5px;top:10.6px"></i>
<i class="sep" style="left:187.5px;top:10.6px"></i>
<i class="sep" style="left:43.5px;top:10.6px"></i>
<span class="t" style="left:1450.0px;transform-origin:right center;top:15.1px;font-size:12px;line-height:15px;font-weight:normal;color:#5e7699;transform:scaleX(0.893)">بازکردن</span>
<svg class="a" style="left:1496px;top:16.6px" width="9" height="12" viewBox="0 0 9 12"><path d="M7 1 L2 6 L7 11" stroke="#5e7699" stroke-width="2" fill="none"/></svg>
<span class="t" style="left:1348.0px;transform-origin:right center;top:15.1px;font-size:12px;line-height:15px;font-weight:normal;color:#5e7699;transform:scaleX(0.917)">بیشتر</span>
<svg class="a" style="left:1385px;top:14.6px" width="6" height="16" viewBox="0 0 6 16"><circle cx="3" cy="2.5" r="1.9" fill="#5e7699"/><circle cx="3" cy="8" r="1.9" fill="#5e7699"/><circle cx="3" cy="13.5" r="1.9" fill="#5e7699"/></svg>
<div class="badge" style="left:1207px;top:8.4px;width:93px;height:29px"></div>
<span class="t" style="left:1211.7px;transform-origin:right center;top:15.1px;font-size:12px;line-height:15px;font-weight:normal;color:#111;transform:scaleX(0.931)">پر با بارنامه</span>
<svg class="a" style="left:1274px;top:16.6px" width="19" height="14" viewBox="0 0 19 14"><path fill="#14786c" d="M0.5 0.5 H13 V4 H15.5 C17 4 18 5.5 18 7.5 V10.5 H0.5 Z"/><rect x="14.3" y="5.2" width="1.6" height="1.6" fill="#fbfcfd"/><circle cx="2.9" cy="11.2" r="1.5" fill="#fbfcfd" stroke="#14786c" stroke-width="1.2"/><circle cx="6.4" cy="11.2" r="1.5" fill="#fbfcfd" stroke="#14786c" stroke-width="1.2"/><circle cx="15.1" cy="11.2" r="1.5" fill="#fbfcfd" stroke="#14786c" stroke-width="1.2"/></svg>
<span class="t" style="left:1100.0px;transform-origin:center center;top:15.1px;font-size:12px;line-height:15px;font-weight:normal;color:#222">۴۰۰۶۰</span>
<span class="t" style="left:974.0px;transform-origin:center center;top:15.1px;font-size:12px;line-height:15px;font-weight:normal;color:#222;transform:scaleX(1.107)">۱۴۰۴/۰۶/۲۲</span>
<span class="t" style="left:880.0px;transform-origin:right center;top:15.1px;font-size:12px;line-height:15px;font-weight:normal;color:#222">مهدی</span>
<span class="t" style="left:761.0px;transform-origin:center center;top:15.1px;font-size:12px;line-height:15px;font-weight:normal;color:#222">-</span>
<div class="plate" style="left:581px;top:6.6px;width:130px;height:32px"><div class="bl" style="width:7px"></div><div class="a" style="left:1px;top:2px;width:5px;height:7px;background:linear-gradient(#239f40 0 33%,#fff 33% 66%,#da0000 66%)"></div><div class="a" style="left:101px;top:0;width:1px;height:32px;background:#333"></div></div>
<span class="t" style="left:687.0px;transform-origin:center center;top:12.6px;font-size:16px;line-height:20px;font-weight:normal;color:#000;transform:scaleX(0.944);-webkit-text-stroke:.3px #000">۱۳</span>
<span class="t" style="left:620.5px;transform-origin:center center;top:8.6px;font-size:20px;line-height:25px;font-weight:normal;color:#000;transform:scaleX(0.917);-webkit-text-stroke:.6px #000">ع</span>
<span class="t" style="left:591.0px;transform-origin:center center;top:12.6px;font-size:16px;line-height:20px;font-weight:normal;color:#000;transform:scaleX(0.944);-webkit-text-stroke:.3px #000">۱۶</span>
<span class="t" style="left:491.0px;transform-origin:center center;top:15.1px;font-size:12px;line-height:15px;font-weight:normal;color:#222">مبارکه</span>
<span class="t" style="left:356.0px;transform-origin:center center;top:15.1px;font-size:12px;line-height:15px;font-weight:normal;color:#222">مبارکه</span>
<span class="t" style="left:213.4px;transform-origin:center center;top:13.6px;font-size:12.5px;line-height:16px;font-weight:normal;color:#222;transform:scaleX(0.863)">۲۶,۵۳۰,۰۰۰</span>
<span class="t" style="left:113.0px;transform-origin:center center;top:15.1px;font-size:12px;line-height:15px;font-weight:normal;color:#222">-</span>
</div>
<div class="row" style="top:386.8px;height:47.8px">
<i class="sep" style="left:1429.4px;top:10.6px"></i>
<i class="sep" style="left:1321.5px;top:10.6px"></i>
<i class="sep" style="left:1186.6px;top:10.6px"></i>
<i class="sep" style="left:1060.6px;top:10.6px"></i>
<i class="sep" style="left:943.5px;top:10.6px"></i>
<i class="sep" style="left:808.4px;top:10.6px"></i>
<i class="sep" style="left:718.5px;top:10.6px"></i>
<i class="sep" style="left:574.6px;top:10.6px"></i>
<i class="sep" style="left:439.4px;top:10.6px"></i>
<i class="sep" style="left:304.5px;top:10.6px"></i>
<i class="sep" style="left:187.5px;top:10.6px"></i>
<i class="sep" style="left:43.5px;top:10.6px"></i>
<span class="t" style="left:1450.0px;transform-origin:right center;top:15.1px;font-size:12px;line-height:15px;font-weight:normal;color:#5e7699;transform:scaleX(0.893)">بازکردن</span>
<svg class="a" style="left:1496px;top:16.6px" width="9" height="12" viewBox="0 0 9 12"><path d="M7 1 L2 6 L7 11" stroke="#5e7699" stroke-width="2" fill="none"/></svg>
<span class="t" style="left:1348.0px;transform-origin:right center;top:15.1px;font-size:12px;line-height:15px;font-weight:normal;color:#5e7699;transform:scaleX(0.917)">بیشتر</span>
<svg class="a" style="left:1385px;top:14.6px" width="6" height="16" viewBox="0 0 6 16"><circle cx="3" cy="2.5" r="1.9" fill="#5e7699"/><circle cx="3" cy="8" r="1.9" fill="#5e7699"/><circle cx="3" cy="13.5" r="1.9" fill="#5e7699"/></svg>
<div class="badge" style="left:1207px;top:8.4px;width:93px;height:29px"></div>
<span class="t" style="left:1211.7px;transform-origin:right center;top:15.1px;font-size:12px;line-height:15px;font-weight:normal;color:#111;transform:scaleX(0.931)">پر با بارنامه</span>
<svg class="a" style="left:1274px;top:16.6px" width="19" height="14" viewBox="0 0 19 14"><path fill="#14786c" d="M0.5 0.5 H13 V4 H15.5 C17 4 18 5.5 18 7.5 V10.5 H0.5 Z"/><rect x="14.3" y="5.2" width="1.6" height="1.6" fill="#fbfcfd"/><circle cx="2.9" cy="11.2" r="1.5" fill="#fbfcfd" stroke="#14786c" stroke-width="1.2"/><circle cx="6.4" cy="11.2" r="1.5" fill="#fbfcfd" stroke="#14786c" stroke-width="1.2"/><circle cx="15.1" cy="11.2" r="1.5" fill="#fbfcfd" stroke="#14786c" stroke-width="1.2"/></svg>
<span class="t" style="left:1100.0px;transform-origin:center center;top:15.1px;font-size:12px;line-height:15px;font-weight:normal;color:#222">۴۰۰۵۹</span>
<span class="t" style="left:974.0px;transform-origin:center center;top:15.1px;font-size:12px;line-height:15px;font-weight:normal;color:#222;transform:scaleX(1.107)">۱۴۰۴/۰۶/۲۲</span>
<span class="t" style="left:880.0px;transform-origin:right center;top:15.1px;font-size:12px;line-height:15px;font-weight:normal;color:#222">مهدی</span>
<span class="t" style="left:761.0px;transform-origin:center center;top:15.1px;font-size:12px;line-height:15px;font-weight:normal;color:#222">-</span>
<div class="plate" style="left:581px;top:6.6px;width:130px;height:32px"><div class="bl" style="width:7px"></div><div class="a" style="left:1px;top:2px;width:5px;height:7px;background:linear-gradient(#239f40 0 33%,#fff 33% 66%,#da0000 66%)"></div><div class="a" style="left:101px;top:0;width:1px;height:32px;background:#333"></div></div>
<span class="t" style="left:687.0px;transform-origin:center center;top:12.6px;font-size:16px;line-height:20px;font-weight:normal;color:#000;transform:scaleX(0.944);-webkit-text-stroke:.3px #000">۱۳</span>
<span class="t" style="left:620.5px;transform-origin:center center;top:8.6px;font-size:20px;line-height:25px;font-weight:normal;color:#000;transform:scaleX(0.917);-webkit-text-stroke:.6px #000">ع</span>
<span class="t" style="left:591.0px;transform-origin:center center;top:12.6px;font-size:16px;line-height:20px;font-weight:normal;color:#000;transform:scaleX(0.944);-webkit-text-stroke:.3px #000">۱۶</span>
<span class="t" style="left:491.0px;transform-origin:center center;top:15.1px;font-size:12px;line-height:15px;font-weight:normal;color:#222">مبارکه</span>
<span class="t" style="left:356.0px;transform-origin:center center;top:15.1px;font-size:12px;line-height:15px;font-weight:normal;color:#222">مبارکه</span>
<span class="t" style="left:213.4px;transform-origin:center center;top:13.6px;font-size:12.5px;line-height:16px;font-weight:normal;color:#222;transform:scaleX(0.863)">۲۶,۵۳۰,۰۰۰</span>
<span class="t" style="left:113.0px;transform-origin:center center;top:15.1px;font-size:12px;line-height:15px;font-weight:normal;color:#222">-</span>
</div>
<div class="row" style="top:434.6px;height:47.8px">
<i class="sep" style="left:1429.4px;top:10.6px"></i>
<i class="sep" style="left:1321.5px;top:10.6px"></i>
<i class="sep" style="left:1186.6px;top:10.6px"></i>
<i class="sep" style="left:1060.6px;top:10.6px"></i>
<i class="sep" style="left:943.5px;top:10.6px"></i>
<i class="sep" style="left:808.4px;top:10.6px"></i>
<i class="sep" style="left:718.5px;top:10.6px"></i>
<i class="sep" style="left:574.6px;top:10.6px"></i>
<i class="sep" style="left:439.4px;top:10.6px"></i>
<i class="sep" style="left:304.5px;top:10.6px"></i>
<i class="sep" style="left:187.5px;top:10.6px"></i>
<i class="sep" style="left:43.5px;top:10.6px"></i>
<span class="t" style="left:1450.0px;transform-origin:right center;top:15.1px;font-size:12px;line-height:15px;font-weight:normal;color:#5e7699;transform:scaleX(0.893)">بازکردن</span>
<svg class="a" style="left:1496px;top:16.6px" width="9" height="12" viewBox="0 0 9 12"><path d="M7 1 L2 6 L7 11" stroke="#5e7699" stroke-width="2" fill="none"/></svg>
<span class="t" style="left:1348.0px;transform-origin:right center;top:15.1px;font-size:12px;line-height:15px;font-weight:normal;color:#5e7699;transform:scaleX(0.917)">بیشتر</span>
<svg class="a" style="left:1385px;top:14.6px" width="6" height="16" viewBox="0 0 6 16"><circle cx="3" cy="2.5" r="1.9" fill="#5e7699"/><circle cx="3" cy="8" r="1.9" fill="#5e7699"/><circle cx="3" cy="13.5" r="1.9" fill="#5e7699"/></svg>
<div class="badge" style="left:1207px;top:8.4px;width:93px;height:29px"></div>
<span class="t" style="left:1211.7px;transform-origin:right center;top:15.1px;font-size:12px;line-height:15px;font-weight:normal;color:#111;transform:scaleX(0.931)">پر با بارنامه</span>
<svg class="a" style="left:1274px;top:16.6px" width="19" height="14" viewBox="0 0 19 14"><path fill="#14786c" d="M0.5 0.5 H13 V4 H15.5 C17 4 18 5.5 18 7.5 V10.5 H0.5 Z"/><rect x="14.3" y="5.2" width="1.6" height="1.6" fill="#fbfcfd"/><circle cx="2.9" cy="11.2" r="1.5" fill="#fbfcfd" stroke="#14786c" stroke-width="1.2"/><circle cx="6.4" cy="11.2" r="1.5" fill="#fbfcfd" stroke="#14786c" stroke-width="1.2"/><circle cx="15.1" cy="11.2" r="1.5" fill="#fbfcfd" stroke="#14786c" stroke-width="1.2"/></svg>
<span class="t" style="left:1100.0px;transform-origin:center center;top:15.1px;font-size:12px;line-height:15px;font-weight:normal;color:#222">۴۴۶۶۴</span>
<span class="t" style="left:974.0px;transform-origin:center center;top:15.1px;font-size:12px;line-height:15px;font-weight:normal;color:#222;transform:scaleX(1.107)">۱۴۰۴/۰۶/۲۲</span>
<span class="t" style="left:890.0px;transform-origin:right center;top:15.1px;font-size:12px;line-height:15px;font-weight:normal;color:#222">مسعود</span>
<span class="t" style="left:761.0px;transform-origin:center center;top:15.1px;font-size:12px;line-height:15px;font-weight:normal;color:#222">-</span>
<div class="plate" style="left:581px;top:6.6px;width:130px;height:32px"><div class="bl" style="width:7px"></div><div class="a" style="left:1px;top:2px;width:5px;height:7px;background:linear-gradient(#239f40 0 33%,#fff 33% 66%,#da0000 66%)"></div><div class="a" style="left:101px;top:0;width:1px;height:32px;background:#333"></div></div>
<span class="t" style="left:687.0px;transform-origin:center center;top:12.6px;font-size:16px;line-height:20px;font-weight:normal;color:#000;transform:scaleX(0.944);-webkit-text-stroke:.3px #000">۵۳</span>
<span class="t" style="left:620.5px;transform-origin:center center;top:8.6px;font-size:20px;line-height:25px;font-weight:normal;color:#000;transform:scaleX(0.917);-webkit-text-stroke:.6px #000">ع</span>
<span class="t" style="left:591.0px;transform-origin:center center;top:12.6px;font-size:16px;line-height:20px;font-weight:normal;color:#000;transform:scaleX(0.944);-webkit-text-stroke:.3px #000">۴۳</span>
<span class="t" style="left:456.0px;transform-origin:center center;top:15.1px;font-size:12px;line-height:15px;font-weight:normal;color:#222">حاجی آباد (هرمزگان)</span>
<span class="t" style="left:357.5px;transform-origin:center center;top:15.1px;font-size:12px;line-height:15px;font-weight:normal;color:#222">لنجان</span>
<span class="t" style="left:209.9px;transform-origin:center center;top:13.6px;font-size:12.5px;line-height:16px;font-weight:normal;color:#222;transform:scaleX(0.855)">۳۲۰,۱۹۰,۰۰۰</span>
<span class="t" style="left:113.0px;transform-origin:center center;top:15.1px;font-size:12px;line-height:15px;font-weight:normal;color:#222">-</span>
</div>
<div class="row" style="top:482.4px;height:47.8px">
<i class="sep" style="left:1429.4px;top:10.5px"></i>
<i class="sep" style="left:1321.5px;top:10.5px"></i>
<i class="sep" style="left:1186.6px;top:10.5px"></i>
<i class="sep" style="left:1060.6px;top:10.5px"></i>
<i class="sep" style="left:943.5px;top:10.5px"></i>
<i class="sep" style="left:808.4px;top:10.5px"></i>
<i class="sep" style="left:718.5px;top:10.5px"></i>
<i class="sep" style="left:574.6px;top:10.5px"></i>
<i class="sep" style="left:439.4px;top:10.5px"></i>
<i class="sep" style="left:304.5px;top:10.5px"></i>
<i class="sep" style="left:187.5px;top:10.5px"></i>
<i class="sep" style="left:43.5px;top:10.5px"></i>
<span class="t" style="left:1450.0px;transform-origin:right center;top:15.0px;font-size:12px;line-height:15px;font-weight:normal;color:#5e7699;transform:scaleX(0.893)">بازکردن</span>
<svg class="a" style="left:1496px;top:16.5px" width="9" height="12" viewBox="0 0 9 12"><path d="M7 1 L2 6 L7 11" stroke="#5e7699" stroke-width="2" fill="none"/></svg>
<span class="t" style="left:1348.0px;transform-origin:right center;top:15.0px;font-size:12px;line-height:15px;font-weight:normal;color:#5e7699;transform:scaleX(0.917)">بیشتر</span>
<svg class="a" style="left:1385px;top:14.5px" width="6" height="16" viewBox="0 0 6 16"><circle cx="3" cy="2.5" r="1.9" fill="#5e7699"/><circle cx="3" cy="8" r="1.9" fill="#5e7699"/><circle cx="3" cy="13.5" r="1.9" fill="#5e7699"/></svg>
<div class="badge" style="left:1207px;top:8.3px;width:93px;height:29px"></div>
<span class="t" style="left:1211.7px;transform-origin:right center;top:15.0px;font-size:12px;line-height:15px;font-weight:normal;color:#111;transform:scaleX(0.931)">پر با بارنامه</span>
<svg class="a" style="left:1274px;top:16.5px" width="19" height="14" viewBox="0 0 19 14"><path fill="#14786c" d="M0.5 0.5 H13 V4 H15.5 C17 4 18 5.5 18 7.5 V10.5 H0.5 Z"/><rect x="14.3" y="5.2" width="1.6" height="1.6" fill="#fbfcfd"/><circle cx="2.9" cy="11.2" r="1.5" fill="#fbfcfd" stroke="#14786c" stroke-width="1.2"/><circle cx="6.4" cy="11.2" r="1.5" fill="#fbfcfd" stroke="#14786c" stroke-width="1.2"/><circle cx="15.1" cy="11.2" r="1.5" fill="#fbfcfd" stroke="#14786c" stroke-width="1.2"/></svg>
<span class="t" style="left:1100.0px;transform-origin:center center;top:15.0px;font-size:12px;line-height:15px;font-weight:normal;color:#222">۴۰۶۲۳</span>
<span class="t" style="left:974.0px;transform-origin:center center;top:15.0px;font-size:12px;line-height:15px;font-weight:normal;color:#222;transform:scaleX(1.107)">۱۴۰۴/۰۶/۲۰</span>
<span class="t" style="left:862.0px;transform-origin:right center;top:15.0px;font-size:12px;line-height:15px;font-weight:normal;color:#222">حسین محمدی</span>
<span class="t" style="left:761.0px;transform-origin:center center;top:15.0px;font-size:12px;line-height:15px;font-weight:normal;color:#222">-</span>
<div class="plate" style="left:581px;top:6.5px;width:130px;height:32px"><div class="bl" style="width:7px"></div><div class="a" style="left:1px;top:2px;width:5px;height:7px;background:linear-gradient(#239f40 0 33%,#fff 33% 66%,#da0000 66%)"></div><div class="a" style="left:101px;top:0;width:1px;height:32px;background:#333"></div></div>
<span class="t" style="left:687.0px;transform-origin:center center;top:12.5px;font-size:16px;line-height:20px;font-weight:normal;color:#000;transform:scaleX(0.944);-webkit-text-stroke:.3px #000">۵۳</span>
<span class="t" style="left:620.5px;transform-origin:center center;top:8.5px;font-size:20px;line-height:25px;font-weight:normal;color:#000;transform:scaleX(0.917);-webkit-text-stroke:.6px #000">ع</span>
<span class="t" style="left:591.0px;transform-origin:center center;top:12.5px;font-size:16px;line-height:20px;font-weight:normal;color:#000;transform:scaleX(0.944);-webkit-text-stroke:.3px #000">۴۳</span>
<span class="t" style="left:473.5px;transform-origin:center center;top:15.0px;font-size:12px;line-height:15px;font-weight:normal;color:#222">معدن گل گهر</span>
<span class="t" style="left:356.0px;transform-origin:center center;top:15.0px;font-size:12px;line-height:15px;font-weight:normal;color:#222">بروجن</span>
<span class="t" style="left:209.9px;transform-origin:center center;top:13.5px;font-size:12.5px;line-height:16px;font-weight:normal;color:#222;transform:scaleX(0.855)">۳۰۶,۱۹۱,۷۰۳</span>
<span class="t" style="left:113.0px;transform-origin:center center;top:15.0px;font-size:12px;line-height:15px;font-weight:normal;color:#222">-</span>
</div>
<div class="a" style="left:0;right:0;top:528px;height:11px;background:#fff"></div>
<div class="a" style="left:283px;top:530px;width:1241px;height:6px;background:#c9c9c9;border-radius:3px"></div>
<i class="a" style="left:4px;top:530px;width:0;height:0;border-top:3px solid transparent;border-bottom:3px solid transparent;border-right:4px solid #bbb"></i>
<i class="a" style="left:1531px;top:530px;width:0;height:0;border-top:3px solid transparent;border-bottom:3px solid transparent;border-left:4px solid #bbb"></i>
</div>
<div class="a" style="left:884px;top:872px;width:28px;height:28px;border-radius:50%;background:#687f9e"></div>
<span class="t" style="left:895.0px;transform-origin:center center;top:878.5px;font-size:12px;line-height:15px;font-weight:normal;color:#fff">۱</span>
<span class="t" style="left:861.0px;transform-origin:center center;top:878.5px;font-size:12px;line-height:15px;font-weight:normal;color:#333">۲</span>
<span class="t" style="left:827.0px;transform-origin:center center;top:878.5px;font-size:12px;line-height:15px;font-weight:normal;color:#333">۳</span>
<span class="t" style="left:793.0px;transform-origin:center center;top:878.5px;font-size:12px;line-height:15px;font-weight:normal;color:#333">۴</span>
<span class="t" style="left:758.0px;transform-origin:center center;top:878.5px;font-size:12px;line-height:15px;font-weight:normal;color:#333">۵</span>
<span class="t" style="left:723.0px;transform-origin:center center;top:878.5px;font-size:12px;line-height:15px;font-weight:normal;color:#333">...</span>
<span class="t" style="left:690.5px;transform-origin:center center;top:878.5px;font-size:12px;line-height:15px;font-weight:normal;color:#333">۹</span>
<svg class="a" style="left:928px;top:881px" width="8" height="11" viewBox="0 0 8 11"><path d="M2 1.2 L6.2 5.5 L2 9.8" stroke="#222" stroke-width="1.6" fill="none"/></svg>
<svg class="a" style="left:655px;top:881px" width="8" height="11" viewBox="0 0 8 11"><path d="M6 1.2 L1.8 5.5 L6 9.8" stroke="#222" stroke-width="1.6" fill="none"/></svg>
<div class="side">
<svg class="a" style="left:65px;top:0" width="158" height="36" viewBox="0 0 158 36"><path fill="#02e9b1" d="M0 0 H158 C142 0 128 7 110 19 C98 27 90 34 79 34 C68 34 60 27 48 19 C30 7 16 0 0 0 Z"/></svg>
<svg class="a" style="left:137px;top:13px" width="15" height="8" viewBox="0 0 15 8"><path d="M0.5 4 H10" stroke="#687f9e" stroke-width="1.8" fill="none"/><path d="M9.5 0.8 L14.5 4 L9.5 7.2 Z" fill="#687f9e"/></svg>
<span class="t" style="left:91.0px;transform-origin:center center;top:52.5px;font-size:23.5px;line-height:29px;font-weight:bold;color:#c9ced6;transform:scaleX(0.776)">سافیکس</span>
<span class="t" style="left:80.5px;transform-origin:center center;top:86.0px;font-size:14.6px;line-height:18px;font-weight:bold;color:#c9ced6;transform:scaleX(0.932);direction:ltr">Safix Admin Panel</span>
<svg class="a" style="left:0;top:277px" width="20" height="64" viewBox="0 0 20 64"><path fill="#f8f9fb" d="M0 0 C0 10 4 16 10 22 C16 28 17 30 17 32 C17 34 16 36 10 42 C4 48 0 54 0 64 Z"/></svg>
<span class="t" style="left:144.0px;transform-origin:right center;top:157.0px;font-size:13px;line-height:16px;font-weight:normal;color:#fff;transform:scaleX(0.882);-webkit-text-stroke:.45px #fff">داشبورد مدیریت</span>
<div class="a" style="left:253px;top:166.5px;transform:translate(-50%,-50%);line-height:0"><svg width="20" height="20" viewBox="0 0 20 20"><path fill="#fff" d="M9 1 L16 4 V9 C16 13 13 17 9 19 C5 17 2 13 2 9 V4 Z"/><circle cx="14.5" cy="14.5" r="4.5" fill="#687f9e"/><circle cx="14.5" cy="14.5" r="3.5" fill="#fff"/><circle cx="14.5" cy="13.3" r="1.1" fill="#687f9e"/><path d="M12.7 16.6 C13.2 15.4 15.8 15.4 16.3 16.6" stroke="#687f9e" stroke-width="1.1" fill="none"/></svg></div>
<span class="t" style="left:186.0px;transform-origin:right center;top:205.0px;font-size:13px;line-height:16px;font-weight:normal;color:#fff;transform:scaleX(0.840);-webkit-text-stroke:.45px #fff">کارگزینی</span>
<div class="a" style="left:253px;top:214.5px;transform:translate(-50%,-50%);line-height:0"><svg width="20" height="20" viewBox="0 0 20 20"><circle cx="10" cy="6" r="4" fill="#fff"/><path fill="#fff" d="M2 18 C2 13 6 11.5 10 11.5 C14 11.5 18 13 18 18 Z"/></svg></div>
<span class="t" style="left:185.0px;transform-origin:right center;top:253.0px;font-size:13px;line-height:16px;font-weight:normal;color:#fff;transform:scaleX(0.939);-webkit-text-stroke:.45px #fff">جمعداری</span>
<div class="a" style="left:253px;top:262.5px;transform:translate(-50%,-50%);line-height:0"><svg width="20" height="16" viewBox="0 0 22 18"><path fill="#fff" d="M0 1 H13 V4 H17 L21 9 V14 H0 Z"/><path fill="#687f9e" d="M14.5 6 H16.5 L19 9 H14.5 Z"/><circle cx="4.5" cy="14.5" r="2.6" fill="#fff" stroke="#687f9e" stroke-width="1.2"/><circle cx="16.5" cy="14.5" r="2.6" fill="#fff" stroke="#687f9e" stroke-width="1.2"/></svg></div>
<span class="t" style="left:142.0px;transform-origin:right center;top:300.0px;font-size:13px;line-height:16px;font-weight:normal;color:#02e9b1;transform:scaleX(0.859);-webkit-text-stroke:.45px #02e9b1">راهبری و عملیات</span>
<div class="a" style="left:253px;top:309.5px;transform:translate(-50%,-50%);line-height:0"><svg width="20" height="20" viewBox="0 0 20 20"><rect x="1" y="1" width="17" height="18" rx="2" fill="#02e9b1"/><rect x="4.5" y="5" width="10" height="2" fill="#687f9e"/><rect x="4.5" y="9" width="10" height="2" fill="#687f9e"/><rect x="4.5" y="13" width="7" height="2" fill="#687f9e"/></svg></div>
<span class="t" style="left:155.0px;transform-origin:right center;top:552.0px;font-size:13px;line-height:16px;font-weight:normal;color:#fff;transform:scaleX(0.842);-webkit-text-stroke:.45px #fff">نظارت راهبری</span>
<div class="a" style="left:253px;top:561.5px;transform:translate(-50%,-50%);line-height:0"><svg width="22" height="16" viewBox="0 0 22 16"><path fill="#fff" d="M11 1 C5.5 1 2 5 1 8 C2 11 5.5 15 11 15 C16.5 15 20 11 21 8 C20 5 16.5 1 11 1 Z"/><circle cx="11" cy="8" r="4.2" fill="#687f9e"/><circle cx="11" cy="8" r="2.4" fill="#fff"/></svg></div>
<span class="t" style="left:179.0px;transform-origin:right center;top:600.0px;font-size:13px;line-height:16px;font-weight:normal;color:#fff;transform:scaleX(0.927);-webkit-text-stroke:.45px #fff">حسابداری</span>
<div class="a" style="left:253px;top:609.5px;transform:translate(-50%,-50%);line-height:0"><svg width="20" height="16" viewBox="0 0 20 16"><rect x="1" y="1.5" width="18" height="13" rx="1.5" fill="none" stroke="#fff" stroke-width="1.8"/><text x="10" y="12.2" font-size="10" font-weight="bold" text-anchor="middle" fill="#fff" font-family="Liberation Sans">$</text></svg></div>
<span class="t" style="left:196.0px;transform-origin:right center;top:648.0px;font-size:13px;line-height:16px;font-weight:normal;color:#fff;transform:scaleX(0.961);-webkit-text-stroke:.45px #fff">صندوق</span>
<div class="a" style="left:253px;top:657.5px;transform:translate(-50%,-50%);line-height:0"><svg width="16" height="20" viewBox="0 0 16 20"><path fill="#fff" d="M2 1 H10 L15 6 V18 C15 18.6 14.6 19 14 19 H2 C1.4 19 1 18.6 1 18 V2 C1 1.4 1.4 1 2 1 Z"/><text x="8" y="15.5" font-size="10" font-weight="bold" text-anchor="middle" fill="#687f9e" font-family="Liberation Sans">$</text></svg></div>
<span class="t" style="left:188.0px;transform-origin:right center;top:695.0px;font-size:13px;line-height:16px;font-weight:normal;color:#fff;transform:scaleX(0.891);-webkit-text-stroke:.45px #fff">تعمیرگاه</span>
<div class="a" style="left:253px;top:704.5px;transform:translate(-50%,-50%);line-height:0"><svg width="20" height="20" viewBox="0 0 20 20"><path d="M3 17 L12 8" stroke="#fff" stroke-width="3"/><path fill="#fff" d="M11 2 L14 1 L19 6 L18 9 L15 7 L12 7 Z"/><path d="M17 17 L8 8" stroke="#fff" stroke-width="2.6"/><path fill="#fff" d="M2 5 C2 3 4 1 6 2 L5 5 L6.5 6.5 L9 5.5 C10 7.5 8 10 5.5 9.5 Z"/></svg></div>
<span class="t" style="left:149.0px;transform-origin:right center;top:742.0px;font-size:13px;line-height:16px;font-weight:normal;color:#fff;transform:scaleX(0.871);-webkit-text-stroke:.45px #fff">پیمانکاران نفتی</span>
<div class="a" style="left:253px;top:751.5px;transform:translate(-50%,-50%);line-height:0"><svg width="22" height="20" viewBox="0 0 22 20"><path fill="#fff" d="M4 6 L14 3 L15 5 L5 8 Z"/><path fill="#fff" d="M14 1 H19 C20.5 1 21 3 21 5 V9 H17 Z"/><path d="M7 8 L4 18 M7 8 L10 18 M5.5 13 H8.5" stroke="#fff" stroke-width="1.6" fill="none"/><rect x="0" y="17.5" width="22" height="2" fill="#fff"/><rect x="17" y="9" width="2" height="8" fill="#fff"/><rect x="1" y="10" width="2" height="8" fill="#fff"/></svg></div>
<span class="t" style="left:175.0px;transform-origin:right center;top:789.0px;font-size:13px;line-height:16px;font-weight:normal;color:#fff;transform:scaleX(0.932);-webkit-text-stroke:.45px #fff">پنل پیامکی</span>
<div class="a" style="left:253px;top:798.5px;transform:translate(-50%,-50%);line-height:0"><svg width="20" height="16" viewBox="0 0 20 16"><rect x="0" y="0" width="20" height="16" rx="2" fill="#fff"/><rect x="3" y="3" width="7" height="1.8" fill="#687f9e"/><rect x="3" y="6" width="5" height="1.8" fill="#687f9e"/></svg></div>
<span class="t" style="left:187.0px;transform-origin:right center;top:837.0px;font-size:13px;line-height:16px;font-weight:normal;color:#fff;transform:scaleX(0.915);-webkit-text-stroke:.45px #fff">تنظیمات</span>
<div class="a" style="left:253px;top:846.5px;transform:translate(-50%,-50%);line-height:0"><svg width="20" height="16" viewBox="0 0 20 16"><rect x="0" y="0" width="20" height="16" rx="2" fill="#fff"/><rect x="3" y="3" width="7" height="1.8" fill="#687f9e"/><rect x="3" y="6" width="5" height="1.8" fill="#687f9e"/></svg></div>
<div class="sub" style="top:345px;height:41px;border-color:#02e9b1"></div>
<span class="t" style="left:140.0px;transform-origin:right center;top:358.5px;font-size:11.5px;line-height:14px;font-weight:normal;color:#fff;transform:scaleX(0.824)">مدیریت سفر / بارنامه</span>
<div class="a" style="left:35px;top:356.5px;width:18px;height:18px;border-radius:50%;background:#02e9b1"></div>
<svg class="a" style="left:40px;top:360.5px" width="8" height="10" viewBox="0 0 8 10"><path d="M6 1 L2 5 L6 9" stroke="#1a1a1a" stroke-width="1.6" fill="none"/></svg>
<div class="sub" style="top:395px;height:41px;border-color:#fff"></div>
<span class="t" style="left:136.0px;transform-origin:right center;top:408.5px;font-size:11.5px;line-height:14px;font-weight:normal;color:#fff;transform:scaleX(0.771)">گزارش مالی رانندگان</span>
<svg class="a" style="left:40px;top:410.5px" width="8" height="10" viewBox="0 0 8 10"><path d="M6 1 L2 5 L6 9" stroke="#fff" stroke-width="1.4" fill="none"/></svg>
<div class="sub" style="top:448px;height:38px;border-color:#fff"></div>
<span class="t" style="left:143.7px;transform-origin:right center;top:459.0px;font-size:13px;line-height:16px;font-weight:bold;color:#fff;transform:scaleX(0.743)">اطلاعات راهبری</span>
<svg class="a" style="left:37px;top:464.0px" width="10" height="7" viewBox="0 0 10 7"><path d="M1 1.5 L5 5.5 L9 1.5" stroke="#fff" stroke-width="1.4" fill="none"/></svg>
<div class="sub" style="top:495px;height:38px;border-color:#fff"></div>
<span class="t" style="left:141.7px;transform-origin:right center;top:506.0px;font-size:13px;line-height:16px;font-weight:bold;color:#fff;transform:scaleX(0.752)">تنظیمات راهبری</span>
<svg class="a" style="left:37px;top:511.0px" width="10" height="7" viewBox="0 0 10 7"><path d="M1 1.5 L5 5.5 L9 1.5" stroke="#fff" stroke-width="1.4" fill="none"/></svg>
</div>
<div class="a" style="left:1899px;top:0;width:3px;height:929px;background:#fff"></div><div class="a" style="left:1901px;top:84px;width:1px;height:824px;background:#c4c4c4"></div>
<script>(function(){var A=[[92.00,1511.00,"r"],[44.00,1493.00,"r"],[69.00,1254.30,"r"],[56.60,1014.80,"r"],[56.90,777.00,"r"],[70.00,538.20,"r"],[56.80,299.50,"r"],[89.90,1493.00,"r"],[30.90,1254.30,"r"],[23.00,1014.80,"r"],[32.80,777.00,"r"],[111.00,538.20,"r"],[118.30,299.50,"r"],[64.70,1493.00,"r"],[66.20,1014.80,"r"],[66.40,777.00,"r"],[71.00,538.20,"r"],[87.70,299.50,"r"],[81.50,1556.00,"r"],[61.40,544.00,"r"],[37.90,407.30,"r"],[92.50,294.00,"r"],[76.50,125.00,"r"],[39.40,1250.50,"c"],[62.00,1120.60,"c"],[59.80,998.60,"c"],[43.70,872.50,"c"],[65.00,760.50,"c"],[57.20,643.00,"c"],[42.00,504.00,"c"],[50.50,369.00,"c"],[40.00,243.00,"c"],[97.60,112.00,"c"],[30.00,29.00,"r"],[35.70,1490.00,"r"],[26.60,1377.00,"r"],[51.20,1266.70,"r"],[30.00,1115.00,"c"],[59.80,1001.00,"c"],[0.00,907.00,"r"],[0.00,763.00,"c"],[17.00,696.00,"c"],[11.00,626.50,"c"],[17.00,600.00,"c"],[0.00,507.00,"c"],[0.00,372.00,"c"],[55.20,245.40,"c"],[0.00,115.00,"c"],[35.70,1490.00,"r"],[26.60,1377.00,"r"],[51.20,1266.70,"r"],[30.00,1115.00,"c"],[59.80,1001.00,"c"],[0.00,907.00,"r"],[0.00,763.00,"c"],[17.00,696.00,"c"],[11.00,626.50,"c"],[17.00,600.00,"c"],[0.00,507.00,"c"],[0.00,372.00,"c"],[55.20,245.40,"c"],[0.00,115.00,"c"],[35.70,1490.00,"r"],[26.60,1377.00,"r"],[51.20,1266.70,"r"],[30.00,1115.00,"c"],[59.80,1001.00,"c"],[0.00,900.00,"r"],[0.00,763.00,"c"],[17.00,696.00,"c"],[11.00,626.50,"c"],[17.00,600.00,"c"],[0.00,507.00,"c"],[0.00,372.00,"c"],[60.72,245.40,"c"],[0.00,115.00,"c"],[35.70,1490.00,"r"],[26.60,1377.00,"r"],[51.20,1266.70,"r"],[30.00,1115.00,"c"],[59.80,1001.00,"c"],[0.00,907.00,"r"],[0.00,763.00,"c"],[17.00,696.00,"c"],[11.00,626.50,"c"],[17.00,600.00,"c"],[0.00,507.00,"c"],[0.00,372.00,"c"],[55.20,245.40,"c"],[0.00,115.00,"c"],[35.70,1490.00,"r"],[26.60,1377.00,"r"],[51.20,1266.70,"r"],[30.00,1115.00,"c"],[59.80,1001.00,"c"],[0.00,916.00,"r"],[0.00,763.00,"c"],[17.00,696.00,"c"],[11.00,626.50,"c"],[17.00,600.00,"c"],[0.00,507.00,"c"],[0.00,372.00,"c"],[60.72,245.40,"c"],[0.00,115.00,"c"],[35.70,1490.00,"r"],[26.60,1377.00,"r"],[51.20,1266.70,"r"],[30.00,1115.00,"c"],[59.80,1001.00,"c"],[0.00,899.00,"r"],[0.00,763.00,"c"],[17.00,696.00,"c"],[11.00,626.50,"c"],[17.00,600.00,"c"],[0.00,507.00,"c"],[0.00,372.00,"c"],[60.72,245.40,"c"],[0.00,115.00,"c"],[35.70,1490.00,"r"],[26.60,1377.00,"r"],[51.20,1266.70,"r"],[30.00,1115.00,"c"],[59.80,1001.00,"c"],[0.00,907.00,"r"],[0.00,763.00,"c"],[17.00,696.00,"c"],[11.00,626.50,"c"],[17.00,600.00,"c"],[0.00,507.00,"c"],[0.00,372.00,"c"],[55.20,245.40,"c"],[0.00,115.00,"c"],[35.70,1490.00,"r"],[26.60,1377.00,"r"],[51.20,1266.70,"r"],[30.00,1115.00,"c"],[59.80,1001.00,"c"],[0.00,907.00,"r"],[0.00,763.00,"c"],[17.00,696.00,"c"],[11.00,626.50,"c"],[17.00,600.00,"c"],[0.00,507.00,"c"],[0.00,372.00,"c"],[55.20,245.40,"c"],[0.00,115.00,"c"],[35.70,1490.00,"r"],[26.60,1377.00,"r"],[51.20,1266.70,"r"],[30.00,1115.00,"c"],[59.80,1001.00,"c"],[0.00,924.00,"r"],[0.00,763.00,"c"],[17.00,696.00,"c"],[11.00,626.50,"c"],[17.00,600.00,"c"],[0.00,507.00,"c"],[0.00,372.00,"c"],[60.72,245.40,"c"],[0.00,115.00,"c"],[35.70,1490.00,"r"],[26.60,1377.00,"r"],[51.20,1266.70,"r"],[30.00,1115.00,"c"],[59.80,1001.00,"c"],[0.00,932.00,"r"],[0.00,763.00,"c"],[17.00,696.00,"c"],[11.00,626.50,"c"],[17.00,600.00,"c"],[0.00,507.00,"c"],[0.00,372.00,"c"],[60.72,245.40,"c"],[0.00,115.00,"c"],[0.00,898.00,"c"],[0.00,864.00,"c"],[0.00,830.00,"c"],[0.00,796.00,"c"],[0.00,761.00,"c"],[0.00,727.50,"c"],[0.00,693.50,"c"],[83.00,144.50,"c"],[118.40,144.00,"c"],[79.40,234.00,"r"],[40.30,234.00,"r"],[46.00,234.00,"r"],[79.00,234.00,"r"],[66.50,234.00,"r"],[51.00,234.00,"r"],[36.50,234.00,"r"],[41.00,234.00,"r"],[74.00,234.00,"r"],[55.00,234.00,"r"],[43.00,234.00,"r"],[85.70,244.00,"r"],[83.30,244.00,"r"],[75.80,245.70,"r"],[78.20,245.70,"r"]];var E=document.querySelectorAll(".t");for(var i=0;i<E.length&&i<A.length;i++){var e=E[i],a=A[i];e.style.transform="none";var n=e.getBoundingClientRect().width;if(!n)continue;var l=a[2]=="r"?a[1]-n:(a[2]=="c"?a[1]-n/2:a[1]);e.style.left=l.toFixed(2)+"px";if(a[0]>0){e.style.transform="scaleX("+(a[0]/n).toFixed(4)+")";}}})();</script>
</body></html>
